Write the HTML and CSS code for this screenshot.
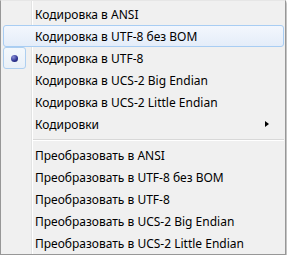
FILE: index.html
```
<!DOCTYPE html>
<html lang="ru">
<head>
    <meta charset="UTF-8">
    <title>Кодировки</title>
    <link rel="stylesheet" href="styles.css">
</head>
<body>
    <div class="menu">
        <div class="item"><span class="icon"></span><span class="label">Кодировка в ANSI</span></div>
        <div class="item hover"><span class="icon"></span><span class="label">Кодировка в UTF-8 без BOM</span></div>
        <div class="item"><span class="icon checked"><span class="bullet"></span></span><span class="label">Кодировка в UTF-8</span></div>
        <div class="item"><span class="icon"></span><span class="label">Кодировка в UCS-2 Big Endian</span></div>
        <div class="item"><span class="icon"></span><span class="label">Кодировка в UCS-2 Little Endian</span></div>
        <div class="item"><span class="icon"></span><span class="label">Кодировки</span><span class="arrow"></span></div>
        <div class="separator"></div>
        <div class="item"><span class="icon"></span><span class="label">Преобразовать в ANSI</span></div>
        <div class="item"><span class="icon"></span><span class="label">Преобразовать в UTF-8 без BOM</span></div>
        <div class="item"><span class="icon"></span><span class="label">Преобразовать в UTF-8</span></div>
        <div class="item"><span class="icon"></span><span class="label">Преобразовать в UCS-2 Big Endian</span></div>
        <div class="item"><span class="icon"></span><span class="label">Преобразовать в UCS-2 Little Endian</span></div>
    </div>
</body>
</html>
```
FILE: styles.css
```
body {
    margin: 0;
    padding: 0;
    background: #fff;
    font-family: "Noto Sans", "Open Sans", sans-serif;
    font-size: 12px;
    color: #000;
}

.menu {
    width: 286px;
    height: 255px;
    box-sizing: border-box;
    border: 1px solid #979797;
    border-top-color: #e6e6e6;
    padding: 2px 1px 2px 2px;
    background: linear-gradient(to right, #f0f0f0 30px, #e2e3e3 30px, #e2e3e3 31px, #fff 31px, #fff 32px, #f0f0f0 32px);
    box-shadow: 2px 2px 2px rgba(0, 0, 0, 0.25);
}

.item {
    height: 22px;
    display: flex;
    align-items: center;
    box-sizing: border-box;
    border: 1px solid transparent;
    border-radius: 3px;
}

.item.hover {
    border-color: #a8cdf3;
    background: linear-gradient(to bottom, #f3f7fd, #e4edf9);
}

.icon {
    width: 23px;
    height: 22px;
    margin: -1px 0 0 -1px;
    box-sizing: border-box;
    display: flex;
    align-items: center;
    justify-content: center;
    flex: none;
}

.icon.checked {
    border: 1px solid #aecff0;
    border-radius: 3px;
    background: linear-gradient(to bottom, #f4f8fc, #e9f0f8);
    margin-bottom: -1px;
}

.bullet {
    width: 7px;
    height: 7px;
    border-radius: 50%;
    background: radial-gradient(circle at 35% 30%, #8a8fd8, #2c3290 60%, #141860);
}

.label {
    margin-left: 9px;
    white-space: nowrap;
    flex: 1;
}

.arrow {
    width: 0;
    height: 0;
    border-top: 3.5px solid transparent;
    border-bottom: 3.5px solid transparent;
    border-left: 4px solid #000;
    margin-right: 14px;
}

.separator {
    height: 9px;
    margin-left: 30px;
    display: flex;
    align-items: center;
}

.separator::before {
    content: "";
    flex: 1;
    height: 1px;
    background: #d8d8d8;
    border-bottom: 1px solid #fff;
}
```
